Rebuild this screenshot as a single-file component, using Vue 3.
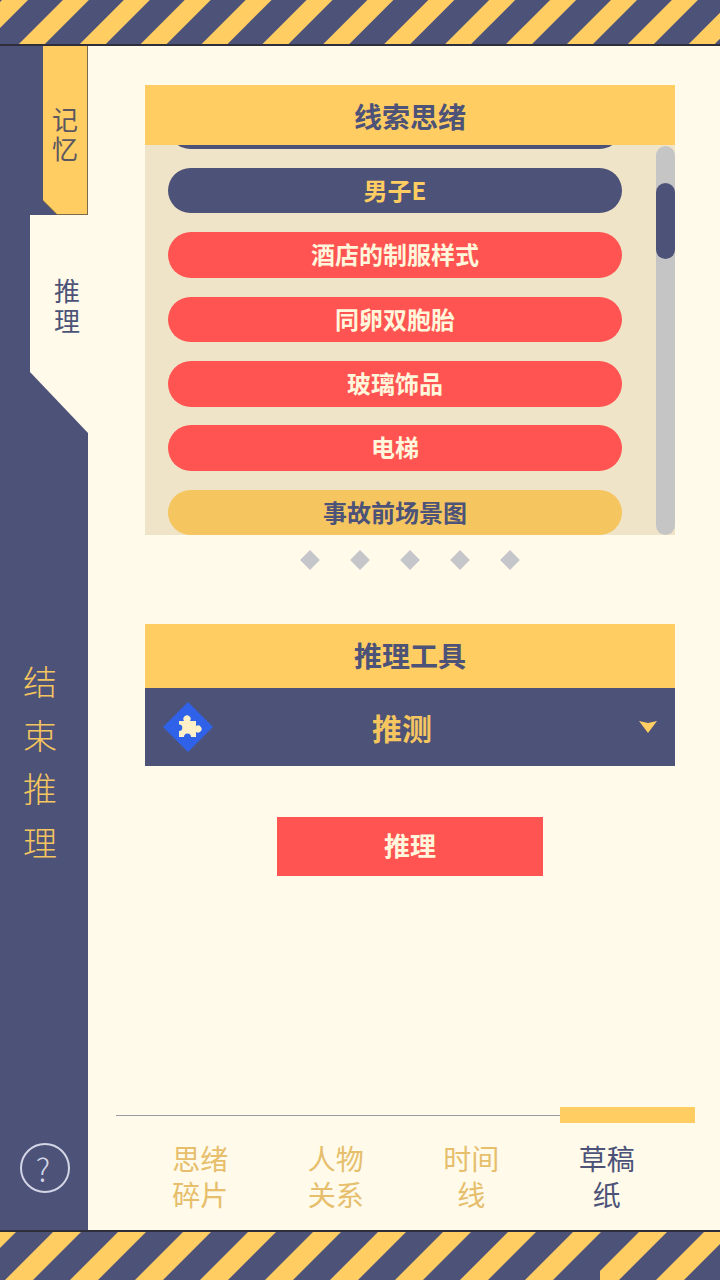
<script setup>
const W = 720

// hazard stripes: each band is a 45deg parallelogram, x = left edge on the bar's lower side
const band = (x, w, h, minX = -100) => {
  const cut = Math.max(x, minX)
  const lowLeft = cut === x ? `${x},${h}` : `${minX},${h - (minX - x)} ${minX},${h}`
  return `${lowLeft} ${x + w},${h} ${x + w + h},0 ${x + h},0`
}

const topBands = []
for (let x = -42; x < W; x += 60.9) topBands.push(band(x, 26, 44))

const bottomBands = []
for (let x = -60; x < 600 - 48; x += 65) bottomBands.push(band(x, 28, 48))
for (let x = 591; x < W; x += 65) bottomBands.push(band(x, 28, 48, 600))

const clues = [
  { text: '', tone: 'navy' },
  { text: '男子E', tone: 'navy' },
  { text: '酒店的制服样式', tone: 'red' },
  { text: '同卵双胞胎', tone: 'red' },
  { text: '玻璃饰品', tone: 'red' },
  { text: '电梯', tone: 'red' },
  { text: '事故前场景图', tone: 'gold' },
]

const dots = [1, 2, 3, 4, 5]

const bottomTabs = [
  { label: ['思绪', '碎片'] },
  { label: ['人物', '关系'] },
  { label: ['时间', '线'] },
  { label: ['草稿', '纸'], active: true },
]
</script>

<template>
  <div class="page">
    <svg class="stripes top" width="720" height="44" viewBox="0 0 720 44">
      <polygon v-for="(p, i) in topBands" :key="i" :points="p" fill="#ffcd62" />
    </svg>

    <div class="middle">
      <aside class="side">
        <div class="tab tab-memory">
          <div class="tab-inner"><span>记</span><span>忆</span></div>
        </div>
        <div class="tab tab-reason">
          <span>推</span><span>理</span>
        </div>
        <div class="finish">
          <span>结</span><span>束</span><span>推</span><span>理</span>
        </div>
        <div class="help">?</div>
      </aside>

      <main class="content">
        <section class="clue-panel">
          <h2 class="panel-title first">线索思绪</h2>
          <div class="clue-body">
            <div class="clue-view">
              <div class="clue-list">
                <div v-for="(c, i) in clues" :key="i" class="pill" :class="c.tone">{{ c.text }}</div>
              </div>
            </div>
            <div class="scrollbar"><div class="thumb"></div></div>
          </div>
        </section>

        <div class="dots">
          <i v-for="d in dots" :key="d" class="dot"></i>
        </div>

        <section class="tool-panel">
          <h2 class="panel-title second">推理工具</h2>
          <div class="tool-select">
            <svg class="tool-icon" width="50" height="50" viewBox="0 0 50 50">
              <polygon points="25,0 50,25 25,50 0,25" fill="#2f62e8" />
              <path d="M16 19 H21 A3.6 3.6 0 1 1 27 19 H33 V24 A3.6 3.6 0 1 1 33 30 V35 H28 A3.4 3.4 0 0 0 21 35 H16 V29 A3 3 0 0 0 16 22.5 Z" fill="#fff0c8" />
            </svg>
            <span class="tool-name">推测</span>
            <i class="caret"></i>
          </div>
        </section>

        <button class="reason-btn">推理</button>

        <div class="bottom-tabs">
          <div class="rule"><div class="rule-line"></div><div class="rule-active"></div></div>
          <div class="tab-row">
            <div v-for="t in bottomTabs" :key="t.label[0]" class="bottom-tab" :class="{ active: t.active }">
              <span v-for="l in t.label" :key="l">{{ l }}</span>
            </div>
          </div>
        </div>
      </main>
    </div>

    <svg class="stripes bottom" width="720" height="48" viewBox="0 0 720 48">
      <polygon v-for="(p, i) in bottomBands" :key="i" :points="p" fill="#ffcd62" />
    </svg>
  </div>
</template>

<style>
html, body { margin: 0; background: #4c5278; }
</style>

<style scoped>
.page {
  width: 720px;
  height: 1280px;
  display: flex;
  flex-direction: column;
  overflow: hidden;
  background: #fffae9;
  font-family: "Noto Sans CJK SC", "Noto Sans", sans-serif;
  color: #4c5278;
}

.stripes {
  display: block;
  flex: none;
  background: #4c5278;
}
.stripes.top { border-bottom: 2px solid #2f2f3c; }
.stripes.bottom { border-top: 2px solid #2f2f3c; margin-top: -1px; }

.middle {
  flex: 1;
  display: flex;
  min-height: 0;
}

.side {
  width: 88px;
  flex: none;
  background: #4c5278;
  display: flex;
  flex-direction: column;
  align-items: flex-end;
}

.tab {
  display: flex;
  flex-direction: column;
  align-items: center;
  font-size: 26px;
  line-height: 29px;
}
.tab span { display: block; }

.tab-memory {
  width: 45px;
  height: 169px;
  background: #7a6a4a;
  clip-path: polygon(0 0, 100% 0, 100% 100%, 14px 100%, 0 155px);
}
.tab-inner {
  width: 44px;
  height: 168px;
  margin-right: 1px;
  padding-top: 58px;
  box-sizing: border-box;
  background: #ffcd62;
  clip-path: polygon(0 0, 100% 0, 100% 100%, 14px 100%, 0 154px);
  display: flex;
  flex-direction: column;
  align-items: center;
  color: #5b5660;
}

.tab-reason {
  width: 58px;
  height: 218px;
  padding: 60px 0 0 24px;
  box-sizing: border-box;
  background: #fffae9;
  clip-path: polygon(0 0, 100% 0, 100% 100%, 0 157px);
  align-items: flex-start;
  line-height: 30px;
}

.finish {
  align-self: flex-start;
  width: 80px;
  margin-top: 221px;
  display: flex;
  flex-direction: column;
  align-items: center;
  font-size: 34px;
  line-height: 53.5px;
  font-weight: 300;
  color: #f5c55f;
}

.help {
  align-self: flex-start;
  margin: auto 0 38px 20px;
  width: 46px;
  height: 46px;
  border: 2px solid #d4d5e6;
  border-radius: 50%;
  color: #d4d5e6;
  font-size: 32px;
  font-weight: 300;
  line-height: 46px;
  text-align: center;
  text-indent: -4px;
}

.content {
  flex: 1;
  min-width: 0;
  display: flex;
  flex-direction: column;
  align-items: center;
  padding: 39px 0 0 12px;
  background: #fffae9;
}

.clue-panel,
.tool-panel {
  width: 530px;
}

.panel-title {
  margin: 0;
  background: #ffcd62;
  font-size: 28px;
  font-weight: 700;
  text-align: center;
}
.panel-title.first { height: 60px; line-height: 62px; }
.panel-title.second { height: 64px; line-height: 62px; }

.clue-body {
  height: 390px;
  display: flex;
  background: #f0e4c8;
  overflow: hidden;
}

.clue-view {
  flex: 1;
  overflow: hidden;
  padding: 0 34px 0 23px;
}

.clue-list {
  margin-top: -41.5px;
  display: flex;
  flex-direction: column;
  gap: 18.9px;
}

.pill {
  height: 45.5px;
  flex: none;
  border-radius: 23px;
  font-size: 24px;
  font-weight: 700;
  line-height: 43px;
  text-align: center;
}
.pill.navy { background: #4c5278; color: #ffcd62; }
.pill.red { background: #ff5452; color: #fff6dc; }
.pill.gold { background: #f5c55f; color: #4c5278; }

.scrollbar {
  width: 19px;
  flex: none;
  margin-top: 1px;
  border-radius: 10px;
  background: #c5c5c5;
  padding-top: 37px;
  box-sizing: border-box;
}
.thumb {
  height: 76px;
  border-radius: 10px;
  background: #4c5278;
}

.dots {
  display: flex;
  gap: 36px;
  margin-top: 18px;
  height: 14px;
}
.dot {
  display: block;
  width: 14px;
  height: 14px;
  background: #c5c6ca;
  transform: rotate(45deg);
}

.tool-panel { margin-top: 57px; }

.tool-select {
  height: 78px;
  background: #4c5278;
  display: flex;
  align-items: center;
  position: relative;
  padding-left: 18px;
}
.tool-icon { flex: none; margin-top: -1px; }
.tool-name {
  flex: 1;
  text-align: center;
  margin-left: -28px;
  margin-right: 56px;
  font-size: 30px;
  font-weight: 700;
  color: #f5c55f;
}
.caret {
  position: absolute;
  right: 18px;
  top: 33px;
  width: 18px;
  height: 12px;
  background: #ffcd62;
  clip-path: polygon(0 0, 50% 16%, 100% 0, 50% 100%);
}

.reason-btn {
  width: 266px;
  height: 59px;
  margin-top: 51px;
  padding: 0 0 4px;
  border: 0;
  background: #ff5452;
  color: #fff6dc;
  font-family: inherit;
  font-size: 26px;
  font-weight: 700;
}

.bottom-tabs {
  margin: auto 0 0 -12px;
  align-self: stretch;
  padding: 0 25px 0 28px;
}
.rule {
  height: 16px;
  display: flex;
  align-items: center;
}
.rule-line {
  flex: 1;
  height: 1px;
  background: #9a9aa0;
}
.rule-active {
  width: 135px;
  height: 16px;
  background: #ffcd62;
}
.tab-row {
  display: grid;
  grid-template-columns: repeat(4, 135.5px);
  margin: 17px 0 19px 16.5px;
}
.bottom-tab {
  display: flex;
  flex-direction: column;
  align-items: center;
  font-size: 28px;
  line-height: 36px;
  color: #e6be6c;
}
.bottom-tab.active { color: #4c5278; }
</style>
